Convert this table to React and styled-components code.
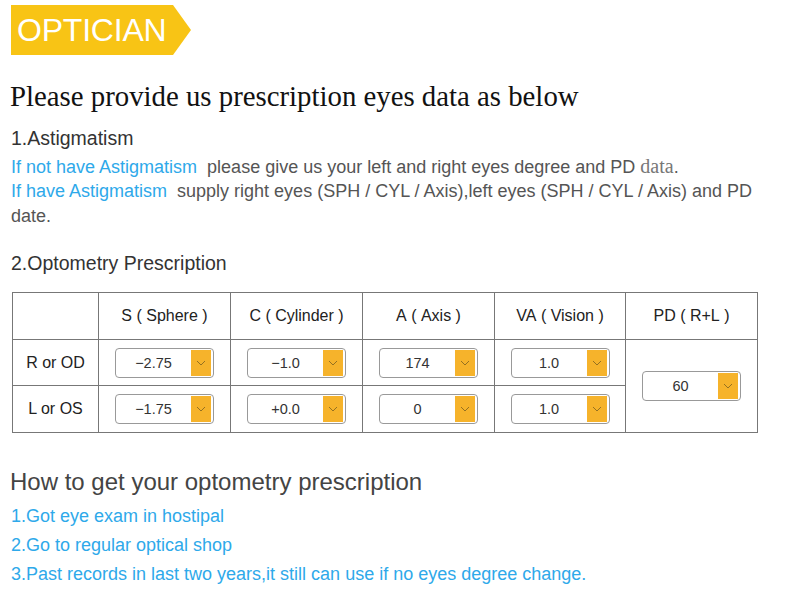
import React from "react";
import styled, { createGlobalStyle } from "styled-components";

const GlobalStyle = createGlobalStyle`
  body {
    margin: 0;
    background: #ffffff;
    font-family: "Liberation Sans", Arial, sans-serif;
  }
`;

const Page = styled.div`
  width: 800px;
  height: 603px;
  overflow: hidden;
  padding: 5px 0 0 10px;
  box-sizing: border-box;
`;

const Badge = styled.div`
  position: relative;
  width: 162px;
  height: 50px;
  margin-left: 1px;
  background: #f8c415;
  color: #ffffff;
  font-size: 32px;
  line-height: 50px;
  padding-left: 6px;
  box-sizing: border-box;
  letter-spacing: -0.2px;

  &::after {
    content: "";
    position: absolute;
    right: -18px;
    top: 0;
    border-top: 25px solid transparent;
    border-bottom: 25px solid transparent;
    border-left: 18px solid #f8c415;
  }
`;

const Headline = styled.h1`
  margin: 24px 0 0;
  font-family: "Liberation Serif", "Times New Roman", serif;
  font-weight: normal;
  font-size: 28.8px;
  line-height: 34px;
  color: #111;
`;

const SectionTitle = styled.h2`
  margin: ${(p) => p.$top || 0}px 0 0 1px;
  font-size: 19.5px;
  font-weight: normal;
  line-height: 24px;
  color: #333;
`;

const Paragraph = styled.div`
  margin: 4px 0 0 1px;
  font-size: 18px;
  color: #555;
`;

const Line = styled.div`
  height: 25px;
  line-height: 25px;
  white-space: nowrap;
`;

const Blue = styled.span`
  color: #2ea9ea;
  margin-right: 10px;
`;

const SerifWord = styled.span`
  font-family: "Liberation Serif", serif;
  font-size: 20px;
  color: #777;
`;

const Table = styled.div`
  margin: 17px 0 0 2px;
  width: 746px;
  display: grid;
  grid-template-columns: 86px 132px 132px 132px 131px 132px;
  grid-template-rows: 47px 46px 47px;
  border-top: 1px solid #777;
  border-left: 1px solid #777;
  box-sizing: border-box;
`;

const Cell = styled.div`
  border-right: 1px solid #777;
  border-bottom: 1px solid #777;
  display: flex;
  align-items: center;
  justify-content: center;
  font-size: 16px;
  color: #222;
  grid-row: ${(p) => p.$rows || "auto"};
  grid-column: ${(p) => p.$col || "auto"};
`;

const Select = styled.div`
  width: 99px;
  height: 30px;
  border: 1px solid #999;
  border-radius: 4px;
  box-sizing: border-box;
  display: flex;
  align-items: center;
  padding: 0 2px 0 0;
  font-size: 14.5px;
  color: #333;
`;

const SelectValue = styled.span`
  flex: 1;
  text-align: center;
`;

const Arrow = styled.span`
  width: 20px;
  height: 26px;
  background: #f6b32b;
  display: flex;
  align-items: center;
  justify-content: center;
`;

const HowTitle = styled.h2`
  margin: 35px 0 0;
  font-size: 24px;
  font-weight: normal;
  line-height: 28px;
  color: #444;
`;

const List = styled.ol`
  list-style: none;
  margin: 6px 0 0 1px;
  padding: 0;
`;

const Item = styled.li`
  font-size: 18px;
  line-height: 29px;
  color: #2ea9ea;
`;

const Chevron = () => (
  <svg width="10" height="6" viewBox="0 0 10 6">
    <path d="M1 1 L5 5 L9 1" fill="none" stroke="#8a6a20" strokeWidth="0.9" />
  </svg>
);

const Dropdown = ({ value }) => (
  <Select>
    <SelectValue>{value}</SelectValue>
    <Arrow>
      <Chevron />
    </Arrow>
  </Select>
);

const headers = ["", "S\u00A0(\u00A0Sphere\u00A0)", "C\u00A0(\u00A0Cylinder\u00A0)", "A\u00A0(\u00A0Axis\u00A0)", "VA\u00A0(\u00A0Vision\u00A0)", "PD\u00A0(\u00A0R+L\u00A0)"];

const rows = [
  { label: "R or OD", values: ["\u22122.75", "\u22121.0", "174", "1.0"] },
  { label: "L or OS", values: ["\u22121.75", "+0.0", "0", "1.0"] },
];

const steps = [
  "1.Got eye exam in hostipal",
  "2.Go to regular optical shop",
  "3.Past records in last two years,it still can use if no eyes degree change.",
];

export default function App() {
  return (
    <Page>
      <GlobalStyle />
      <Badge>OPTICIAN</Badge>
      <Headline>Please provide us prescription eyes data as below</Headline>

      <SectionTitle $top={13}>1.Astigmatism</SectionTitle>
      <Paragraph>
        <Line>
          <Blue>If not have Astigmatism</Blue>
          <span>please give us your left and right eyes degree and PD </span>
          <SerifWord>data</SerifWord>
          <span>.</span>
        </Line>
        <Line>
          <Blue>If have Astigmatism</Blue>
          <span>supply right eyes (SPH / CYL / Axis),left eyes (SPH / CYL / Axis) and PD</span>
        </Line>
        <Line>date.</Line>
      </Paragraph>

      <SectionTitle $top={22}>2.Optometry Prescription</SectionTitle>

      <Table>
        {headers.map((h, i) => (
          <Cell key={i}>{h}</Cell>
        ))}
        {rows.map((row, r) => (
          <React.Fragment key={row.label}>
            <Cell $col="1">{row.label}</Cell>
            {row.values.map((v, i) => (
              <Cell key={i} $col={String(i + 2)}>
                <Dropdown value={v} />
              </Cell>
            ))}
            {r === 0 && (
              <Cell $col="6" $rows="2 / span 2">
                <Dropdown value="60" />
              </Cell>
            )}
          </React.Fragment>
        ))}
      </Table>

      <HowTitle>How to get your optometry prescription</HowTitle>
      <List>
        {steps.map((s) => (
          <Item key={s}>{s}</Item>
        ))}
      </List>
    </Page>
  );
}
